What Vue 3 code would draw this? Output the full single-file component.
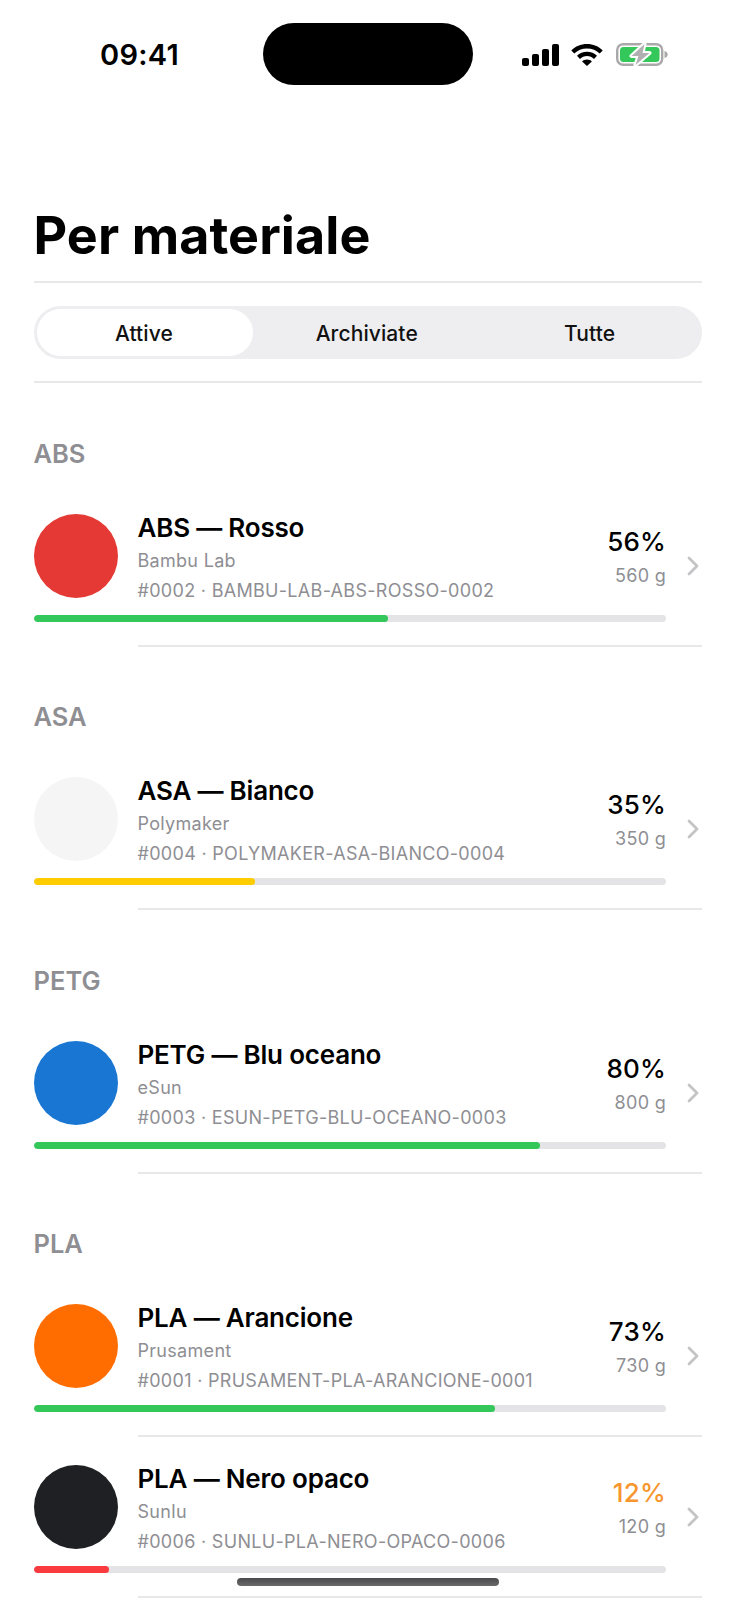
<script setup>
const tabs = ['Attive', 'Archiviate', 'Tutte']

const groups = [
  {
    name: 'ABS',
    items: [
      { title: 'ABS — Rosso', brand: 'Bambu Lab', code: '#0002 · BAMBU-LAB-ABS-ROSSO-0002', pct: 56, weight: '560 g', color: '#e53935', bar: '#34c759' },
    ],
  },
  {
    name: 'ASA',
    items: [
      { title: 'ASA — Bianco', brand: 'Polymaker', code: '#0004 · POLYMAKER-ASA-BIANCO-0004', pct: 35, weight: '350 g', color: '#f5f5f5', bar: '#ffcc00' },
    ],
  },
  {
    name: 'PETG',
    items: [
      { title: 'PETG — Blu oceano', brand: 'eSun', code: '#0003 · ESUN-PETG-BLU-OCEANO-0003', pct: 80, weight: '800 g', color: '#1976d2', bar: '#34c759' },
    ],
  },
  {
    name: 'PLA',
    items: [
      { title: 'PLA — Arancione', brand: 'Prusament', code: '#0001 · PRUSAMENT-PLA-ARANCIONE-0001', pct: 73, weight: '730 g', color: '#ff6d00', bar: '#34c759' },
      { title: 'PLA — Nero opaco', brand: 'Sunlu', code: '#0006 · SUNLU-PLA-NERO-OPACO-0006', pct: 12, weight: '120 g', color: '#1f2023', bar: '#f93a3f', low: true },
    ],
  },
]
</script>

<template>
  <div class="screen">
    <header class="status">
      <span class="time">09:41</span>
      <div class="island"></div>
      <div class="status-icons">
        <svg width="37" height="22" viewBox="0 0 37 22">
          <rect x="0" y="14" width="7" height="8" rx="2" />
          <rect x="10" y="10" width="7" height="12" rx="2" />
          <rect x="20" y="5" width="7" height="17" rx="2" />
          <rect x="30" y="0" width="7" height="22" rx="2" />
        </svg>
        <svg width="32" height="22" viewBox="0 0 32 22">
          <path d="M16 0C9.8 0 4.3 2.4.3 6.4l3 3.1C6.5 6.3 11 4.4 16 4.4s9.500 1.900 12.700 5.100l3-3.100C27.700 2.400 22.200 0 16 0z" />
          <path d="M16 7.800c-3.900 0-7.400 1.500-10 4l3 3.100c1.800-1.700 4.300-2.800 7-2.800s5.200 1.100 7 2.800l3-3.100c-2.600-2.500-6.100-4-10-4z" />
          <path d="M16 15.500c-1.900 0-3.600.7-4.900 1.900L16 22l4.900-4.600c-1.300-1.200-3-1.900-4.900-1.900z" />
        </svg>
        <svg width="52" height="23" viewBox="0 0 52 23">
          <rect x="1.200" y="1.200" width="45" height="20.600" rx="6" fill="none" stroke="#a9a9a9" stroke-width="2.400" />
          <rect x="4" y="4" width="39.500" height="15" rx="3.500" fill="#34c759" />
          <path d="M48.500 8v7c1.900-.4 3.200-1.800 3.200-3.500S50.400 8.400 48.500 8z" fill="#a9a9a9" />
          <path d="M28.500 1 15.500 13h7L19.500 22 33.500 10h-7L28.500 1z" fill="#b0b0b0" stroke="#fff" stroke-width="4" stroke-linejoin="round" paint-order="stroke" />
        </svg>
      </div>
    </header>

    <h1 class="title">Per materiale</h1>

    <div class="filter">
      <div class="segment">
        <button v-for="(t, i) in tabs" :key="t" class="tab" :class="{ active: i === 0 }">{{ t }}</button>
      </div>
    </div>

    <section v-for="g in groups" :key="g.name" class="group">
      <h2 class="group-name">{{ g.name }}</h2>
      <div v-for="item in g.items" :key="item.code" class="row">
        <div class="row-main">
          <div class="body">
            <div class="top">
              <div class="swatch" :style="{ background: item.color }"></div>
              <div class="info">
                <div class="name">{{ item.title }}</div>
                <div class="brand">{{ item.brand }}</div>
                <div class="code">{{ item.code }}</div>
              </div>
              <div class="amount">
                <div class="pct" :class="{ low: item.low }">{{ item.pct }}%</div>
                <div class="weight">{{ item.weight }}</div>
              </div>
            </div>
            <div class="track">
              <div class="fill" :style="{ width: item.pct + '%', background: item.bar }"></div>
            </div>
          </div>
          <svg class="chevron" width="12" height="20" viewBox="0 0 12 20">
            <path d="M2 2l8 8-8 8" fill="none" stroke="#c4c4c6" stroke-width="2.800" stroke-linecap="round" stroke-linejoin="round" />
          </svg>
        </div>
      </div>
    </section>

    <div class="home-bar"></div>
  </div>
</template>

<style>
body {
  background: #fff;
}
</style>

<style scoped>
.screen {
  position: relative;
  width: 736px;
  height: 1600px;
  overflow: hidden;
  background: #fff;
  font-family: Inter, "Liberation Sans", sans-serif;
  color: #000;
}

.status {
  display: flex;
  align-items: flex-start;
  height: 85px;
  padding: 23px 68px 0 100px;
  box-sizing: border-box;
}

.time {
  width: 163px;
  margin-top: 16px;
  font-size: 29px;
  line-height: 32px;
  font-weight: 600;
  letter-spacing: 0.3px;
}

.island {
  width: 210px;
  height: 62px;
  border-radius: 31px;
  background: #000;
}

.status-icons {
  display: flex;
  align-items: center;
  gap: 12px;
  margin-left: 49px;
  margin-top: 20px;
}

.status-icons svg:last-child {
  margin-left: 1px;
}

.title {
  margin: 117px 34px 0 33.5px;
  padding-bottom: 11px;
  border-bottom: 2px solid #e8e8ea;
  font-size: 52px;
  line-height: 68px;
  font-weight: 700;
  letter-spacing: 0.1px;
}

.filter {
  margin: 23px 34px 0 33.5px;
  padding-bottom: 22px;
  border-bottom: 2px solid #e8e8ea;
}

.segment {
  display: grid;
  grid-template-columns: repeat(3, 1fr);
  gap: 6px;
  height: 53px;
  padding: 3px;
  box-sizing: border-box;
  border-radius: 27px;
  background: #eeeef0;
}

.tab {
  border: 0;
  padding: 2px 2px 0 0;
  background: none;
  border-radius: 24px;
  font: 450 21px Inter, "Liberation Sans", sans-serif;
  letter-spacing: 0.1px;
  color: #111;
}

.tab.active {
  background: #fff;
}

.group-name {
  margin: 54.5px 34px 16px 33.5px;
  font-size: 25.5px;
  line-height: 32px;
  font-weight: 600;
  color: #8e8e93;
}

.row {
  margin-left: 33.5px;
  padding-top: 28px;
}

.row-main {
  position: relative;
  display: flex;
  align-items: flex-start;
  margin-right: 34px;
  padding-bottom: 25px;
}

.row-main::after {
  content: "";
  position: absolute;
  left: 104px;
  right: 0;
  bottom: 0;
  height: 2px;
  background: #e8e8ea;
}

.body {
  width: 632.5px;
}

.top {
  display: flex;
  align-items: flex-start;
  height: 84px;
}

.swatch {
  flex: none;
  width: 84px;
  height: 84px;
  border-radius: 50%;
}

.info {
  flex: 1;
  margin-left: 20px;
  margin-top: -4px;
}

.name {
  font-size: 26px;
  line-height: 36px;
  font-weight: 600;
  letter-spacing: -0.2px;
}

.brand {
  margin-top: 2px;
  font-size: 18px;
  line-height: 26px;
  letter-spacing: 0.3px;
  color: #8e8e93;
}

.code {
  margin-top: 4px;
  font-size: 18px;
  line-height: 26px;
  letter-spacing: 0.3px;
  color: #8e8e93;
}

.amount {
  margin-top: 10px;
  text-align: right;
}

.pct {
  font-size: 26px;
  line-height: 36px;
  font-weight: 550;
  letter-spacing: 0.2px;
}

.pct.low {
  color: #f7962e;
}

.weight {
  margin-top: 4px;
  font-size: 18px;
  line-height: 24px;
  letter-spacing: 0.3px;
  color: #8e8e93;
}

.track {
  height: 7px;
  margin-top: 17px;
  border-radius: 4px;
  background: #e4e4e6;
  overflow: hidden;
}

.fill {
  height: 100%;
  border-radius: 4px;
}

.chevron {
  flex: none;
  margin: 42px 0 0 21px;
}

.home-bar {
  position: absolute;
  left: 237px;
  top: 1578px;
  width: 262px;
  height: 8px;
  border-radius: 4px;
  background: linear-gradient(#4a4a4c, #6a6a6c);
}
</style>
